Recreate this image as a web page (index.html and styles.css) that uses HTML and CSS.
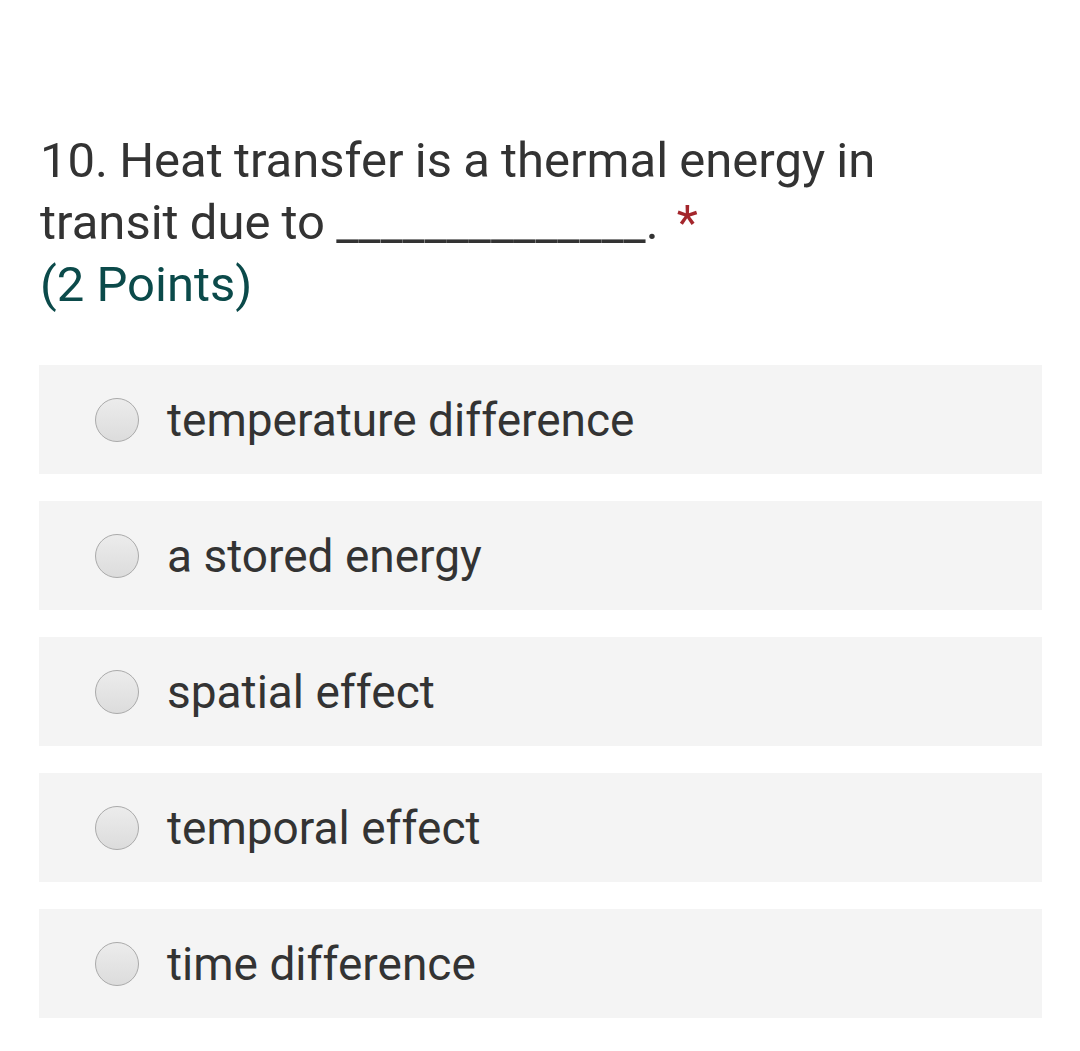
FILE: index.html
```html
<!DOCTYPE html>
<html>
<head>
<meta charset="utf-8">
<link rel="stylesheet" href="styles.css">
</head>
<body>
<div class="page">
  <div class="question">
    <div class="title">10. Heat transfer is a thermal energy in transit due to ______________.<span class="req">*</span></div>
    <div class="points">(2 Points)</div>
  </div>
  <div class="options">
    <div class="option"><span class="radio"></span><span class="label">temperature difference</span></div>
    <div class="option"><span class="radio"></span><span class="label">a stored energy</span></div>
    <div class="option"><span class="radio"></span><span class="label">spatial effect</span></div>
    <div class="option"><span class="radio"></span><span class="label">temporal effect</span></div>
    <div class="option"><span class="radio"></span><span class="label">time difference</span></div>
  </div>
</div>
</body>
</html>
```
FILE: styles.css
```css
html, body {
  margin: 0;
  padding: 0;
  background: #ffffff;
}
body {
  font-family: Roboto, "Noto Sans", sans-serif;
  color: #333333;
}
.page {
  padding: 130px 38px 0 39px;
}
.question {
  padding-left: 1px;
  width: 900px;
}
.title {
  font-size: 49px;
  line-height: 62px;
  color: #333333;
  word-spacing: -1px;
}
.req {
  color: #a4262c;
  margin-left: 18px;
}
.points {
  font-size: 49px;
  line-height: 62px;
  color: #0b4a4a;
}
.options {
  margin-top: 49px;
  display: flex;
  flex-direction: column;
  gap: 27px;
}
.option {
  height: 109px;
  background: #f4f4f4;
  display: flex;
  align-items: center;
  padding-left: 56px;
}
.radio {
  width: 42px;
  height: 42px;
  border-radius: 50%;
  border: 1px solid #aaaaaa;
  background: linear-gradient(#ececec, #dcdcdc);
  flex: none;
}
.label {
  margin-left: 28px;
  font-size: 46px;
  color: #333333;
}
```
